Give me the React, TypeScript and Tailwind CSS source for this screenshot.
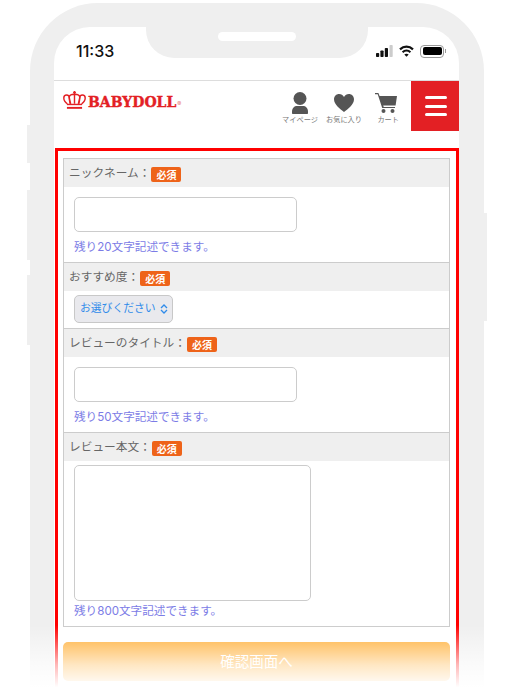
import React from "react";

function Badge() {
  return (
    <span className="ml-[1px] mt-[3px] inline-flex items-center justify-center w-[30px] h-[15px] rounded-[2px] bg-[#ee6319] text-white text-[10px] font-bold leading-none">
      必須
    </span>
  );
}

function RowHead({ label }: { label: string }) {
  return (
    <div className="h-[28px] bg-[#efefef] pl-[5px] flex items-center text-[11.7px] text-[#666666] leading-none">
      <span className="mt-[2px]">{label}</span>
      <Badge />
    </div>
  );
}

function Note({ n }: { n: string }) {
  return (
    <p className="text-[11.6px] leading-[16px] text-[#7c7ce6] pl-[10px]">
      残り{n}文字記述できます。
    </p>
  );
}

function TextInput() {
  return <div className="w-[223px] h-[35px] ml-[10px] rounded-[5px] border border-[#cccccc] bg-white" />;
}

function Person() {
  return (
    <svg width="16" height="22" viewBox="0 0 16 22" fill="#555555">
      <circle cx="8" cy="6.500" r="6.500" />
      <path d="M1 22c-.6 0-1-.4-1-1v-1.500C0 16 2.500 14 5 14h6c2.500 0 5 2 5 5.500V21c0 .6-.4 1-1 1z" />
    </svg>
  );
}

function Heart() {
  return (
    <svg width="20" height="18" viewBox="0 0 20 18" fill="#555555">
      <path d="M10 18C6 15 0 10.500 0 5.300 0 2.200 2.300 0 5.100 0 7.200 0 9 1.100 10 3c1-1.900 2.800-3 4.900-3C17.700 0 20 2.200 20 5.300 20 10.500 14 15 10 18z" />
    </svg>
  );
}

function Cart() {
  return (
    <svg width="22" height="20" viewBox="0 0 22 20" fill="#555555">
      <path d="M0 0h3.400l1.200 3H22l-1.400 9.500H8.200l.5 1.500H20v1H7.200L2.700 1.300H0z" />
      <circle cx="8.500" cy="18" r="2" />
      <circle cx="17.500" cy="18" r="2" />
    </svg>
  );
}

function Crown() {
  return (
    <svg width="23" height="18" viewBox="0 0 24 19" fill="none" stroke="#e32024" strokeWidth="1.500">
      <path d="M12 0v3.500M10.500 1.500h3" />
      <path d="M4.500 13.500C2 12 .7 9.500 .7 7.500c0-2 1.500-3.200 3-3.200 1.600 0 2.800 1.300 2.800 3 0 2 .4 4 1 6.200M19.500 13.500c2.500-1.500 3.800-4 3.800-6 0-2-1.500-3.200-3-3.200-1.600 0-2.800 1.300-2.800 3 0 2-.4 4-1 6.200" />
      <path d="M8 13.500C7 10 6.500 8 6.500 6.500 6.500 4.500 9 3.500 12 3.500s5.500 1 5.500 3c0 1.500-.5 3.500-1.500 7M12 3.500v10" />
      <path d="M4 14.200h16" />
      <path d="M4 17.800h16" strokeWidth="2" />
    </svg>
  );
}

function Signal() {
  return (
    <svg width="17" height="12" viewBox="0 0 17 12">
      <rect x="0" y="8" width="3.200" height="4" rx=".8" fill="#111" />
      <rect x="4.400" y="5.500" width="3.200" height="6.500" rx=".8" fill="#111" />
      <rect x="8.800" y="3" width="3.200" height="9" rx=".8" fill="#111" />
      <rect x="13.500" y="0" width="3.200" height="12" rx=".8" fill="#cccccc" />
    </svg>
  );
}

function Wifi() {
  return (
    <svg width="15" height="12" viewBox="0 0 15 12" fill="none" stroke="#111" strokeWidth="2.200">
      <path d="M1 4.400C4.800.8 10.200.8 14 4.400" />
      <path d="M3.600 7.200C5.800 5.200 9.200 5.200 11.400 7.200" />
      <path d="M7.500 11.800 5.300 9.500c1.200-1.100 3.200-1.100 4.400 0z" fill="#111" stroke="none" />
    </svg>
  );
}

function Battery() {
  return (
    <div className="flex items-center">
      <div className="w-[24px] h-[13px] rounded-[4px] border border-[#999999] p-[1.500px]">
        <div className="w-full h-full rounded-[2px] bg-black" />
      </div>
      <div className="w-[1px] h-[4px] bg-[#999999] ml-[1px]" />
    </div>
  );
}

export default function App() {
  return (
    <div className="relative w-[512px] h-[696px] overflow-hidden bg-white font-['Inter','Noto_Sans_CJK_JP',sans-serif]">
      {/* side buttons */}
      <div className="absolute left-[27px] top-[125px] w-[3px] h-[38px] bg-[#efefef]" />
      <div className="absolute left-[27px] top-[190px] w-[3px] h-[70px] bg-[#efefef]" />
      <div className="absolute left-[27px] top-[275px] w-[3px] h-[70px] bg-[#efefef]" />
      <div className="absolute left-[484px] top-[213px] w-[3px] h-[108px] bg-[#efefef]" />

      {/* phone */}
      <div className="absolute left-[30px] top-[3px] w-[454px] h-[760px] rounded-t-[68px] bg-[#efefef] px-[24px] pt-[24px]">
        <div className="relative w-[405px] h-full rounded-t-[36px] bg-white">
          {/* notch */}
          <div className="absolute left-[92px] top-0 w-[222px] h-[31px] rounded-b-[28px] bg-[#efefef]">
            <div className="mx-auto mt-[5px] w-[78px] h-[9px] rounded-full bg-white" />
          </div>
          {/* status bar */}
          <div className="h-[53px] flex items-start justify-between pl-[22px] pr-[13px] pt-[14px]">
            <span className="text-[16px] leading-[20px] font-medium text-[#111111]">11:33</span>
            <div className="flex items-center gap-[6px] h-[20px]">
              <Signal />
              <Wifi />
              <Battery />
            </div>
          </div>
          {/* header */}
          <div className="h-[50px] border-t border-[#dddddd] flex items-start">
            <div className="flex items-start pl-[9px] pt-[10px]">
              <Crown />
              <span className="ml-[2px] mt-[3px] text-[14px] leading-[16px] font-['DejaVu_Serif',serif] font-bold text-[#e32024] [-webkit-text-stroke:0.4px_#e32024]">BABYDOLL</span>
              <span className="ml-[1px] mt-[9px] text-[6px] leading-[8px] text-[#e8777a]">®</span>
            </div>
            <div className="ml-auto flex items-start pt-[11px]">
              <div className="w-[36px] flex flex-col items-center">
                <div className="h-[22px] flex items-center"><Person /></div>
                <span className="mt-[1px] text-[7.200px] leading-[10px] text-[#777777] whitespace-nowrap">マイページ</span>
              </div>
              <div className="ml-[8px] w-[36px] flex flex-col items-center">
                <div className="h-[22px] flex items-center"><Heart /></div>
                <span className="mt-[1px] text-[7.200px] leading-[10px] text-[#777777] whitespace-nowrap">お気に入り</span>
              </div>
              <div className="ml-[13px] w-[24px] flex flex-col items-start">
                <div className="h-[22px] flex items-center"><Cart /></div>
                <span className="self-end mt-[1px] text-[7.200px] leading-[10px] text-[#777777] whitespace-nowrap">カート</span>
              </div>
            </div>
            <div className="ml-[12px] w-[48px] h-[50px] bg-[#e32024] flex flex-col justify-center gap-[5.500px] pl-[14px] pr-[12px]">
              <div className="h-[3px] rounded-full bg-white" />
              <div className="h-[3px] rounded-full bg-white" />
              <div className="h-[3px] rounded-full bg-white" />
            </div>
          </div>
          {/* red frame */}
          <div className="mt-[18px] ml-[1px] border-[3px] border-[#ff0000] px-[5px] pt-[7px] pb-[10px]">
            <div className="w-[387px] border border-[#cccccc] bg-white">
              <RowHead label="ニックネーム：" />
              <div className="pt-[10px] h-[76px] border-b border-[#cccccc]">
                <TextInput />
                <div className="mt-[7px]"><Note n="20" /></div>
              </div>
              <RowHead label="おすすめ度：" />
              <div className="h-[38px] pt-[4px] pl-[10px] border-b border-[#cccccc]">
                <div className="w-[99px] h-[28px] rounded-[5px] border border-[#c8c8c8] bg-[#e9e9ed] flex items-center pl-[5px] gap-[4px] text-[#2f8bea] text-[10.800px] leading-none whitespace-nowrap">
                  <span>お選びください</span>
                  <svg width="8" height="10" viewBox="0 0 8 10" fill="none" stroke="#2f8bea" strokeWidth="1.300">
                    <path d="M1 4 4 1l3 3M1 6l3 3 3-3" />
                  </svg>
                </div>
              </div>
              <RowHead label="レビューのタイトル：" />
              <div className="pt-[10px] h-[76px] border-b border-[#cccccc]">
                <TextInput />
                <div className="mt-[7px]"><Note n="50" /></div>
              </div>
              <RowHead label="レビュー本文：" />
              <div className="pt-[4px] h-[165px]">
                <div className="w-[237px] h-[136px] ml-[10px] rounded-[5px] border border-[#cccccc] bg-white" />
                <div className="mt-[2px]"><Note n="800" /></div>
              </div>
            </div>
            <div className="mt-[15px] w-[387px] h-[39px] rounded-[5px] bg-[#ffa826] flex items-center justify-center text-white text-[14.500px]">
              確認画面へ
            </div>
          </div>
        </div>
      </div>

      {/* bottom fade */}
      <div className="absolute left-0 right-0 bottom-0 h-[71px] bg-[linear-gradient(to_bottom,#ffffff00_0%,#ffffffb8_56%,#ffffff_88%)]" />
    </div>
  );
}
